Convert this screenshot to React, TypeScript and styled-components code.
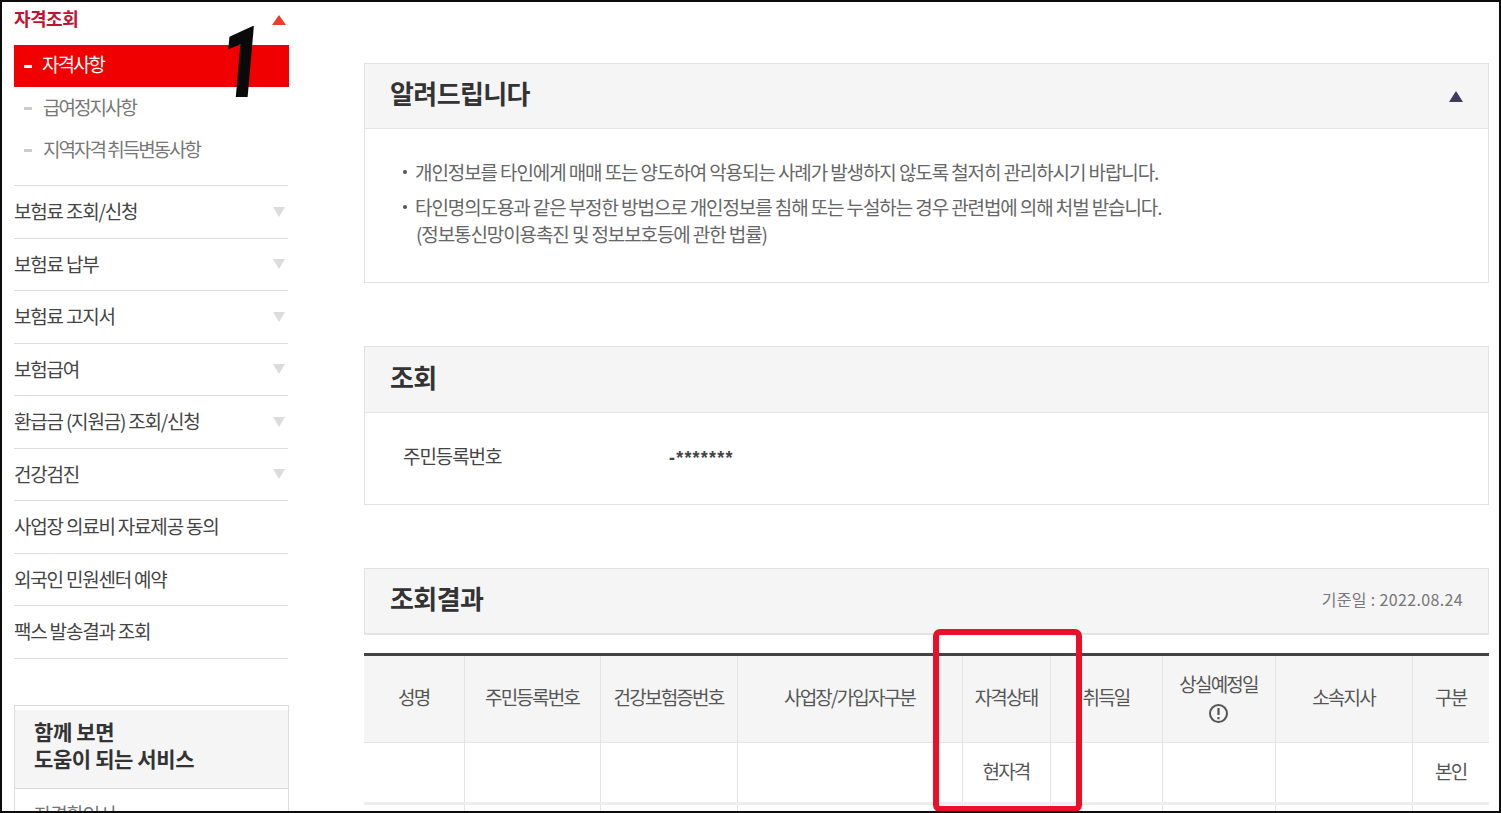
import React from "react";
import styled, { createGlobalStyle } from "styled-components";

const Global = createGlobalStyle`
  html, body { margin: 0; padding: 0; background: #fff; }
  body { font-family: "Noto Sans CJK KR", "Noto Sans", sans-serif; color: #333; overflow: hidden; }
  * { box-sizing: border-box; }
`;

const Frame = styled.div`
  position: relative; display: flex; width: 1501px; height: 813px;
  border: 2px solid #0c0c0c; overflow: hidden; background: #fff;
`;
const Sidebar = styled.aside`
  width: 275px; margin-left: 12px; flex: none; letter-spacing: -1.2px;
`;
const SideHead = styled.div`
  display: flex; align-items: center; justify-content: space-between;
  height: 43px; padding: 0 3px 8px 0; font-size: 18px; font-weight: 700; color: #c5102f; letter-spacing: -0.5px;
`;
const SideLabel = styled.span`
  margin-bottom: 4px;
`;
const Tri = styled.span<{ $up?: boolean; $color: string; $w?: number; $h?: number }>`
  width: 0; height: 0; display: block; flex: none;
  border-left: ${p => (p.$w ?? 13) / 2}px solid transparent;
  border-right: ${p => (p.$w ?? 13) / 2}px solid transparent;
  ${p => (p.$up ? "border-bottom" : "border-top")}: ${p => p.$h ?? 10}px solid ${p => p.$color};
`;
const SubList = styled.ul`
  list-style: none; margin: 0; padding: 0 0 14px; border-bottom: 1px solid #ddd; width: 274px;
`;
const SubItem = styled.li<{ $active?: boolean }>`
  display: flex; align-items: center; height: 42px; padding: 0 0 0 10px; width: 275px;
  font-size: 19px; letter-spacing: -2px; color: ${p => (p.$active ? "#fff" : "#777")};
  background: ${p => (p.$active ? "#f00000" : "transparent")};
  &::before {
    content: ""; width: 8px; height: 3px; margin-right: ${p => (p.$active ? 10 : 11)}px;
    background: ${p => (p.$active ? "#fff" : "#ccc")};
  }
`;
const SubLabel = styled.span<{ $active?: boolean }>`
  margin-bottom: ${p => (p.$active ? 5 : 3)}px;
`;
const MenuItem = styled.div`
  display: flex; align-items: center; justify-content: space-between;
  height: 52.5px; width: 274px; padding: 0 3px 2px 0; border-bottom: 1px solid #ddd;
  font-size: 19px; color: #444;
  ${Tri} { margin-top: 2px; }
`;
const ServiceBox = styled.div`
  margin-top: 46px; border: 1px solid #ddd; height: 140px;
`;
const ServiceHead = styled.div`
  height: 79px; margin-top: 4px; padding: 8px 0 0 19px; background: #f5f5f6; border-bottom: 1px solid #ddd;
  font-size: 21px; font-weight: 700; line-height: 27px; color: #333; letter-spacing: -0.4px;
`;
const ServiceLink = styled.div`
  padding: 11px 0 0 19px; font-size: 19px; color: #777; letter-spacing: -1.2px;
`;
const Main = styled.main`
  width: 1125px; margin-left: 75px; padding-top: 61px; flex: none; letter-spacing: -1.1px;
`;
const Panel = styled.section<{ $h: number }>`
  height: ${p => p.$h}px; margin-bottom: 63px; border: 1px solid #e2e2e2;
`;
const PanelHead = styled.div<{ $h: number }>`
  display: flex; align-items: center; justify-content: space-between;
  height: ${p => p.$h}px; padding: 0 25px; background: #f5f5f6; border-bottom: 1px solid #e4e4e4;
`;
const PanelTitle = styled.h2`
  margin: 0 0 7px; font-size: 26px; font-weight: 700; color: #333; letter-spacing: -0.6px;
`;
const DateNote = styled.span`
  margin-bottom: 5px; font-size: 16px; color: #777; letter-spacing: 0.35px;
`;
const Notices = styled.ul`
  list-style: none; margin: 0; padding: 29px 0 0 38px;
`;
const Notice = styled.li`
  position: relative; padding-left: 12px; margin-bottom: 8px; font-size: 19px; line-height: 27px; color: #666;
  &::before {
    content: ""; position: absolute; left: 0; top: 12px; width: 4px; height: 4px; border-radius: 50%; background: #555;
  }
`;
const NoticeNote = styled.span`
  display: block; padding-left: 1px;
`;
const QueryRow = styled.div`
  display: flex; align-items: center; height: 90px; padding: 0 0 6px 38px; font-size: 19px; color: #444;
`;
const QueryLabel = styled.span`
  width: 266px;
`;
const QueryValue = styled.span`
  margin-top: 6px; font-family: "Liberation Sans", sans-serif; font-size: 18px; font-weight: 700; letter-spacing: 1.2px; color: #444;
`;
const Table = styled.table`
  width: 1125px; margin-top: -45px; table-layout: fixed; border-collapse: collapse; border-top: 3px solid #444; letter-spacing: -1.8px;
`;
const Th = styled.th`
  height: 88px; padding: 0 0 4px; background: #f5f5f6; border-right: 1px solid #e4e4e4; border-bottom: 1px solid #e4e4e4;
  font-size: 19px; font-weight: 400; color: #555; line-height: 28px;
  &:last-child { border-right: 0; }
`;
const Td = styled.td`
  height: 61px; padding: 0 0 4px; text-align: center; border-right: 1px solid #e4e4e4; border-bottom: 3px solid #eee;
  font-size: 19px; color: #555;
  &:last-child { border-right: 0; }
`;
const Info = styled.svg`
  display: block; margin: 5px auto 0; width: 21px; height: 21px;
`;
const Highlight = styled.div`
  position: absolute; left: 931px; top: 627px; width: 149px; height: 183px;
  border: 6px solid #ea1029; border-radius: 7px;
`;
const Mark = styled.span`
  position: absolute; left: 211px; top: 8px; font-family: Roboto, sans-serif;
  font-size: 100px; line-height: 106px; font-weight: 900; color: #0a0a0a;
  transform: skewX(-5deg) scaleX(0.72);
`;

const menus: [string, boolean][] = [
  ["보험료 조회/신청", true], ["보험료 납부", true], ["보험료 고지서", true], ["보험급여", true],
  ["환급금 (지원금) 조회/신청", true], ["건강검진", true], ["사업장 의료비 자료제공 동의", false],
  ["외국인 민원센터 예약", false], ["팩스 발송결과 조회", false],
];
const cols = [100, 136, 137, 225, 88, 112, 113, 137, 77];

export default function App() {
  return (
    <>
      <Global />
      <Frame>
        <Sidebar>
          <SideHead><SideLabel>자격조회</SideLabel><Tri $up $color="#ee3b2b" $w={14} /></SideHead>
          <SubList>
            <SubItem $active><SubLabel $active>자격사항</SubLabel></SubItem>
            <SubItem><SubLabel>급여정지사항</SubLabel></SubItem>
            <SubItem><SubLabel>지역자격 취득변동사항</SubLabel></SubItem>
          </SubList>
          {menus.map(([label, arrow]) => (
            <MenuItem key={label}>{label}{arrow && <Tri $color="#dcdcdc" />}</MenuItem>
          ))}
          <ServiceBox>
            <ServiceHead>함께 보면<br />도움이 되는 서비스</ServiceHead>
            <ServiceLink>자격확인서</ServiceLink>
          </ServiceBox>
        </Sidebar>
        <Main>
          <Panel $h={220}>
            <PanelHead $h={65}>
              <PanelTitle>알려드립니다</PanelTitle>
              <Tri $up $color="#3f3a64" $w={14} $h={11} />
            </PanelHead>
            <Notices>
              <Notice>개인정보를 타인에게 매매 또는 양도하여 악용되는 사례가 발생하지 않도록 철저히 관리하시기 바랍니다.</Notice>
              <Notice>타인명의도용과 같은 부정한 방법으로 개인정보를 침해 또는 누설하는 경우 관련법에 의해 처벌 받습니다.<NoticeNote>(정보통신망이용촉진 및 정보보호등에 관한 법률)</NoticeNote></Notice>
            </Notices>
          </Panel>
          <Panel $h={159}>
            <PanelHead $h={66}><PanelTitle>조회</PanelTitle></PanelHead>
            <QueryRow><QueryLabel>주민등록번호</QueryLabel><QueryValue>-*******</QueryValue></QueryRow>
          </Panel>
          <Panel $h={67}>
            <PanelHead $h={65}>
              <PanelTitle>조회결과</PanelTitle>
              <DateNote>기준일 : 2022.08.24</DateNote>
            </PanelHead>
          </Panel>
          <Table>
            <colgroup>{cols.map((w, i) => <col key={i} style={{ width: w }} />)}</colgroup>
            <thead>
              <tr>
                <Th>성명</Th><Th>주민등록번호</Th><Th>건강보험증번호</Th><Th>사업장/가입자구분</Th><Th>자격상태</Th><Th>취득일</Th>
                <Th>상실예정일
                  <Info viewBox="0 0 21 21" fill="none">
                    <circle cx="10.5" cy="10.5" r="8.5" stroke="#555" strokeWidth="2" />
                    <path d="M10.5 5v7M10.5 14v2.2" stroke="#555" strokeWidth="2.2" />
                  </Info>
                </Th>
                <Th>소속지사</Th><Th>구분</Th>
              </tr>
            </thead>
            <tbody>
              <tr><Td /><Td /><Td /><Td /><Td>현자격</Td><Td /><Td /><Td /><Td>본인</Td></tr>
              <tr><Td /><Td /><Td /><Td /><Td /><Td /><Td /><Td /><Td /></tr>
            </tbody>
          </Table>
        </Main>
        <Mark>1</Mark>
        <Highlight />
      </Frame>
    </>
  );
}
